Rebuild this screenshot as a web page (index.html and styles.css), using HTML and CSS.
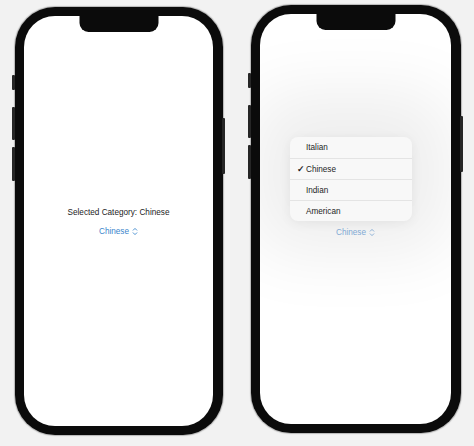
FILE: index.html
```html
<!DOCTYPE html>
<html lang="en">
<head>
<meta charset="utf-8">
<title>Category Picker</title>
<link rel="stylesheet" href="styles.css">
</head>
<body>
<main class="stage">
  <!-- Phone 1: picker closed -->
  <div class="phone phone-a">
    <span class="btn btn-l1"></span>
    <span class="btn btn-l2"></span>
    <span class="btn btn-l3"></span>
    <span class="btn btn-r"></span>
    <div class="screen">
      <div class="notch"></div>
      <div class="content">
        <p class="label">Selected Category: Chinese</p>
        <div class="picker">
          <span>Chinese</span>
          <svg class="chev" viewBox="0 0 6 9" width="6" height="9"><path d="M1.2 3.2 L3 1.4 L4.8 3.2 M1.2 5.8 L3 7.6 L4.8 5.8" fill="none" stroke="currentColor" stroke-width="0.9" stroke-linecap="round" stroke-linejoin="round"/></svg>
        </div>
      </div>
    </div>
  </div>

  <!-- Phone 2: picker open -->
  <div class="phone phone-b">
    <span class="btn btn-l1"></span>
    <span class="btn btn-l2"></span>
    <span class="btn btn-l3"></span>
    <span class="btn btn-r"></span>
    <div class="screen">
      <div class="notch"></div>
      <div class="content">
        <p class="label hidden">Selected Category: Chinese</p>
        <div class="picker dim">
          <span>Chinese</span>
          <svg class="chev" viewBox="0 0 6 9" width="6" height="9"><path d="M1.2 3.2 L3 1.4 L4.8 3.2 M1.2 5.8 L3 7.6 L4.8 5.8" fill="none" stroke="currentColor" stroke-width="0.9" stroke-linecap="round" stroke-linejoin="round"/></svg>
          <ul class="menu">
            <li><span class="check"></span>Italian</li>
            <li><span class="check">✓</span>Chinese</li>
            <li><span class="check"></span>Indian</li>
            <li><span class="check"></span>American</li>
          </ul>
        </div>
      </div>
    </div>
  </div>
</main>
</body>
</html>
```

FILE: styles.css
```css
* { box-sizing: border-box; }

html, body {
  margin: 0;
  padding: 0;
  background: #f2f2f2;
  font-family: "Liberation Sans", Arial, sans-serif;
}

.stage {
  display: flex;
  align-items: flex-start;
  gap: 28px;
  padding-left: 15px;
  width: 474px;
  height: 446px;
}

.phone {
  position: relative;
  background: #0b0b0b;
  border-radius: 40px;
  padding: 9px 10px 9px 9px;
  box-shadow: 0 0 1px 1px rgba(0,0,0,0.25);
}

.phone-a { width: 208px; height: 428px; margin-top: 7px; }
.phone-b { width: 210px; height: 428px; margin-top: 5px; }

.btn {
  position: absolute;
  width: 3px;
  background: #262626;
  border-radius: 1px;
}
.btn-l1 { left: -3px; top: 68px; height: 15px; }
.btn-l2 { left: -3px; top: 100px; height: 33px; }
.btn-l3 { left: -3px; top: 140px; height: 34px; }
.btn-r  { right: -2px; top: 111px; height: 56px; }

.screen {
  position: relative;
  width: 100%;
  height: 100%;
  background: #ffffff;
  border-radius: 31px;
  overflow: hidden;
}

.notch {
  position: absolute;
  top: 0;
  left: 50%;
  transform: translateX(-50%);
  width: 79px;
  height: 16px;
  background: #0b0b0b;
  border-radius: 0 0 9px 9px;
}

.content {
  height: 100%;
  display: flex;
  flex-direction: column;
  align-items: center;
  padding-top: 191px;
  gap: 8px;
}

.label {
  margin: 0;
  font-size: 8.2px;
  line-height: 11px;
  color: #1c1c1c;
}
.label.hidden { visibility: hidden; }

.picker {
  position: relative;
  display: flex;
  align-items: center;
  gap: 3px;
  font-size: 8.2px;
  line-height: 11px;
  color: #3a86cc;
}
.picker.dim { color: #88b3df; }
.chev { display: block; }

.phone-b .content { padding-top: 194px; }

.menu {
  position: absolute;
  bottom: 17px;
  left: -46px;
  width: 122px;
  margin: 0;
  padding: 0;
  list-style: none;
  background: #f8f8f8;
  border-radius: 8px;
  box-shadow: 0 -6px 70px 38px rgba(0,0,0,0.07), 0 2px 12px rgba(0,0,0,0.06);
  color: #1e1e1e;
}

.menu li {
  display: flex;
  align-items: center;
  height: 21px;
  font-size: 8.2px;
  border-top: 1px solid #e4e4e4;
}
.menu li:first-child { border-top: none; height: 21px; }

.check {
  width: 16px;
  padding-left: 7px;
  font-size: 8.5px;
  font-weight: bold;
}
```
